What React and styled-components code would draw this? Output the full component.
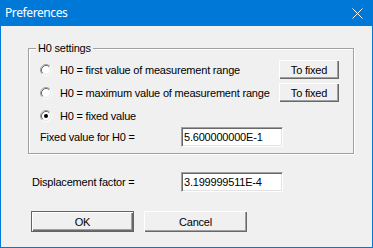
import React from "react";
import styled, { createGlobalStyle } from "styled-components";

const Global = createGlobalStyle`
  html, body { margin: 0; padding: 0; background: #f0f0f0; }
  body { font-family: "Liberation Sans", Arial, sans-serif; }
  * { box-sizing: border-box; }
`;

const Window = styled.div`
  width: 373px;
  height: 248px;
  border: 1px solid #0078d7;
  background: #f0f0f0;
  display: flex;
  flex-direction: column;
`;

const TitleBar = styled.div`
  height: 25px;
  flex: none;
  background: #0078d7;
  color: #fff;
  display: flex;
  align-items: center;
  justify-content: space-between;
  padding: 0 9px 0 4px;
  font-family: "Noto Sans", "Open Sans", sans-serif;
  font-size: 12px;
  letter-spacing: -0.4px;
`;

const Title = styled.span`
  line-height: 25px;
  padding-bottom: 2px;
`;

const Body = styled.div`
  flex: 1;
  padding-top: 22px;
  font-family: "Liberation Sans", Arial, sans-serif;
  font-size: 11px;
  letter-spacing: -0.2px;
  color: #000;
`;

const Group = styled.div`
  position: relative;
  margin-left: 27px;
  width: 326px;
  border: 1px solid #a0a0a0;
  box-shadow: inset 1px 1px 0 #fff, 1px 1px 0 #fff;
  padding: 9px 14px 6px 11px;
`;

const Legend = styled.span`
  position: absolute;
  left: 7px;
  top: -8px;
  padding: 0 2px;
  background: #f0f0f0;
  line-height: 14px;
`;

const Row = styled.div`
  display: flex;
  align-items: center;
  height: ${(p) => p.$h || 23}px;
`;

const RadioLabel = styled.span`
  flex: 1;
  margin-left: 8px;
`;

const Label = styled.span`
  width: ${(p) => p.$w}px;
  flex: none;
`;

const Button = styled.button`
  font: inherit;
  letter-spacing: inherit;
  color: #000;
  width: ${(p) => p.$w}px;
  height: ${(p) => p.$h}px;
  padding: 0;
  background: #f0f0f0;
  border: ${(p) => (p.$default ? "1px solid #646464" : "none")};
  box-shadow: inset 1px 1px 0 #fff, inset -1px -1px 0 #696969,
    inset -2px -2px 0 #a0a0a0;
  flex: none;
  outline: none;
`;

const TextBox = styled.div`
  width: 102px;
  height: 20px;
  flex: none;
  background: #fff;
  border: 1px solid;
  border-color: #a0a0a0 #fff #fff #a0a0a0;
  box-shadow: inset 1px 1px 0 #696969, inset -1px -1px 0 #e3e3e3;
  padding: 0 0 0 2px;
  display: flex;
  align-items: center;
`;

const Standalone = styled.div`
  display: flex;
  align-items: center;
  height: 20px;
  margin-top: 18px;
  padding-left: 31px;
`;

const ButtonRow = styled.div`
  display: flex;
  gap: 10px;
  margin-top: 19px;
  padding-left: 30px;
`;

function Radio({ checked }) {
  return (
    <svg width="12" height="12" viewBox="0 0 12 12" style={{ flex: "none" }}>
      <circle cx="6" cy="6" r="5" fill="#fff" />
      <path d="M2.11 9.89 A5.5 5.5 0 0 1 9.89 2.11" fill="none" stroke="#a0a0a0" />
      <path d="M9.89 2.11 A5.5 5.5 0 0 1 2.11 9.89" fill="none" stroke="#fff" />
      <path d="M2.82 9.18 A4.5 4.5 0 0 1 9.18 2.82" fill="none" stroke="#696969" />
      <path d="M9.18 2.82 A4.5 4.5 0 0 1 2.82 9.18" fill="none" stroke="#e3e3e3" />
      {checked && <circle cx="6" cy="6" r="2" fill="#000" />}
    </svg>
  );
}

function CloseIcon() {
  return (
    <svg width="11" height="11" viewBox="0 0 11 11">
      <path d="M0.5 0.5 L10.5 10.5 M10.5 0.5 L0.5 10.5" stroke="#fff" strokeWidth="1" />
    </svg>
  );
}

const options = [
  { text: "H0 = first value of measurement range", btn: true },
  { text: "H0 = maximum value of measurement range", btn: true },
  { text: "H0 = fixed value", checked: true },
];

export default function App() {
  return (
    <>
      <Global />
      <Window>
        <TitleBar>
          <Title>Preferences</Title>
          <CloseIcon />
        </TitleBar>
        <Body>
          <Group>
            <Legend>H0 settings</Legend>
            {options.map((o) => (
              <Row key={o.text}>
                <Radio checked={o.checked} />
                <RadioLabel>{o.text}</RadioLabel>
                {o.btn && (
                  <Button $w={60} $h={19}>
                    To fixed
                  </Button>
                )}
              </Row>
            ))}
            <Row $h={20}>
              <Label $w={141}>Fixed value for H0 =</Label>
              <TextBox>5.600000000E-1</TextBox>
            </Row>
          </Group>
          <Standalone>
            <Label $w={149}>Displacement factor =</Label>
            <TextBox>3.199999511E-4</TextBox>
          </Standalone>
          <ButtonRow>
            <Button $w={103} $h={21} $default>
              OK
            </Button>
            <Button $w={103} $h={21}>
              Cancel
            </Button>
          </ButtonRow>
        </Body>
      </Window>
    </>
  );
}
